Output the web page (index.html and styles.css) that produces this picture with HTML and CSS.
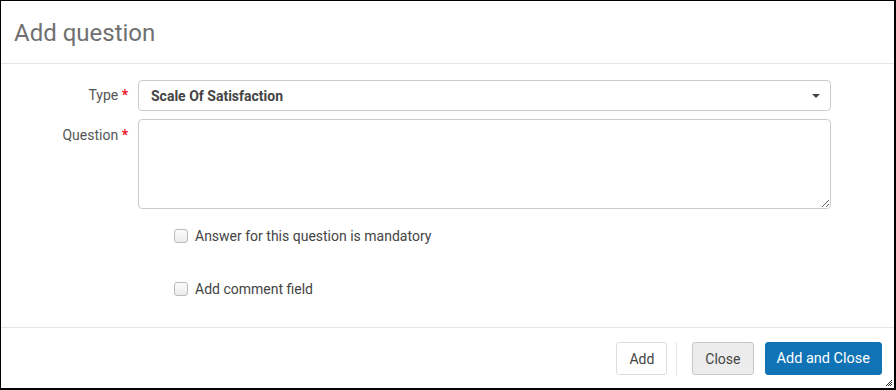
FILE: index.html
```html
<!DOCTYPE html>
<html lang="en">
<head>
	<meta charset="UTF-8">
	<title>Add question</title>
	<link rel="stylesheet" href="styles.css">
</head>
<body>

	<div class="dialog">
		<div class="dialog-header">
			<h1>Add question</h1>
		</div>

		<form class="dialog-body">
			<!-- Type -->
			<div class="row">
				<label class="row-label">Type <span class="req">*</span></label>
				<div class="select">
					<span>Scale Of Satisfaction</span>
					<span class="caret"></span>
				</div>
			</div>

			<!-- Question -->
			<div class="row">
				<label class="row-label row-label-top">Question <span class="req">*</span></label>
				<textarea class="textarea"></textarea>
			</div>

			<label class="check check-first">
				<span class="box"></span> Answer for this question is mandatory
			</label>

			<label class="check">
				<span class="box"></span> Add comment field
			</label>
		</form>

		<div class="dialog-footer">
			<button type="button" class="btn">Add</button>
			<span class="sep"></span>
			<button type="button" class="btn btn-grey">Close</button>
			<button type="button" class="btn btn-primary">Add and Close</button>
		</div>

		<svg class="grip" width="8" height="8" viewBox="0 0 8 8">
			<path d="M7 1L1 7M7 3L3 7M7 5L5 7" stroke="#333" stroke-width="1"/>
		</svg>
	</div>

</body>
</html>
```

FILE: styles.css
```css
body {
	margin: 0;
	font-family: Roboto, "Liberation Sans", Arial, sans-serif;
	color: #444;
}
.dialog {
	position: relative;
	width: 896px;
	height: 390px;
	box-sizing: border-box;
	border: 1px solid #000;
	border-right-width: 2px;
	border-bottom-width: 2px;
	background: #fff;
	display: flex;
	flex-direction: column;
}
.dialog-header {
	height: 62px;
	border-bottom: 1px solid #e5e5e5;
	display: flex;
	align-items: center;
	padding-left: 13px;
}
.dialog-header h1 {
	margin: 0;
	font-size: 24px;
	font-weight: 400;
	color: #707070;
	padding-top: 1px;
}
.dialog-body {
	flex: 1;
	padding: 16px 0 0 0;
	display: flex;
	flex-direction: column;
}
.row {
	display: flex;
	align-items: flex-start;
	margin-bottom: 8px;
}
.row-label {
	width: 127px;
	text-align: right;
	padding-right: 10px;
	font-size: 14px;
	line-height: 31px;
	color: #555;
}
.row-label-top {
	line-height: 17px;
	padding-top: 8px;
}
.req {
	color: #e8101e;
	font-weight: 700;
}
.select {
	height: 29px;
	border: 1px solid #ccc;
	border-radius: 4px;
	display: flex;
	align-items: center;
	justify-content: space-between;
	padding: 0 12px;
	font-size: 14px;
	font-weight: 700;
	color: #444;
	box-sizing: content-box;
	width: 667px;
}
.caret {
	width: 0;
	height: 0;
	border-left: 4px solid transparent;
	border-right: 4px solid transparent;
	border-top: 4px solid #444;
	margin-right: -2px;
}
.textarea {
	width: 693px;
	height: 90px;
	box-sizing: border-box;
	border: 1px solid #ccc;
	border-radius: 4px;
	margin: 0;
	padding: 6px 12px;
	font-family: inherit;
	font-size: 14px;
	resize: vertical;
}
.check {
	display: flex;
	align-items: center;
	margin-left: 173px;
	font-size: 14px;
	color: #444;
	height: 20px;
}
.check-first {
	margin-top: 9px;
	margin-bottom: 33px;
}
.box {
	width: 12px;
	height: 12px;
	border: 1px solid #bbb;
	border-radius: 3px;
	background: linear-gradient(#fdfdfd, #eaeaea);
	margin-right: 7px;
}
.dialog-footer {
	height: 61px;
	border-top: 1px solid #e5e5e5;
	display: flex;
	align-items: center;
	justify-content: flex-end;
	padding-right: 12px;
	padding-top: 1px;
	box-sizing: border-box;
}
.btn {
	height: 33px;
	padding: 0 12px;
	font-family: inherit;
	font-size: 14px;
	color: #444;
	background: #fff;
	border: 1px solid #ddd;
	border-radius: 3px;
	margin-left: 11px;
}
.btn-grey {
	background: #ececec;
	border-color: #c8c8c8;
	margin-left: 15px;
}
.btn-primary {
	background: #0f73b6;
	border-color: #0f73b6;
	color: #fff;
	font-size: 14.5px;
	padding: 0 11px;
}
.sep {
	width: 1px;
	height: 34px;
	background: #e8e8e8;
	margin-left: 9px;
}
.grip {
	position: absolute;
	right: 1px;
	bottom: 1px;
}
```
